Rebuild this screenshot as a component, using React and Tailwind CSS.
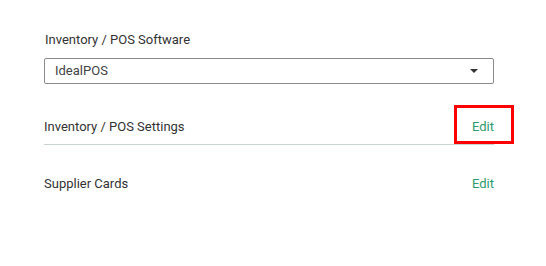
import React from 'react';

export default function App() {
  return (
    <div
      className="w-[546px] h-[266px] bg-white text-[13px] text-[#333]"
      style={{ fontFamily: 'Roboto, "Liberation Sans", sans-serif' }}
    >
      <div className="pl-[44px] pr-[52px] pt-[31px]">
        <div className="pl-[1px] leading-[18px]">Inventory / POS Software</div>
        <div className="mt-[9px] h-[26px] border border-[#8a8a8a] rounded-[2px] flex items-center justify-between pl-[10px] pr-[15px]">
          <span className="text-[#444]">IdealPOS</span>
          <span className="w-0 h-0 border-l-[4px] border-r-[4px] border-t-[4px] border-l-transparent border-r-transparent border-t-[#333]" />
        </div>

        <div className="relative mt-[22px] h-[39px] flex items-center justify-between border-b border-[#c9d3d3] pt-[4px] leading-[18px]">
          <span>Inventory / POS Settings</span>
          <span className="text-[#2e9a6c]">Edit</span>
          <span className="absolute left-[410px] top-[-1px] w-[60px] h-[39px] border-[3px] border-[#ff0000]" />
        </div>

        <div className="flex justify-between pt-[30px] leading-[18px]">
          <span>Supplier Cards</span>
          <span className="text-[#2e9a6c]">Edit</span>
        </div>
      </div>
    </div>
  );
}
